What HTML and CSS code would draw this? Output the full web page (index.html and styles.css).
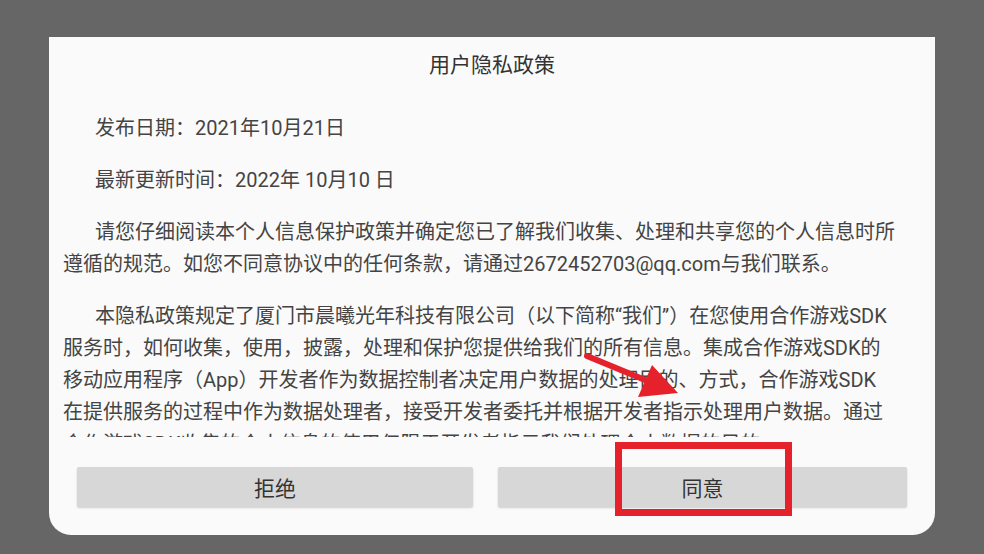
FILE: index.html
```html
<!DOCTYPE html>
<html lang="zh-CN">
<head>
<meta charset="utf-8">
<title>用户隐私政策</title>
<link rel="stylesheet" href="styles.css">
</head>
<body>
<div class="screen">
  <div class="dialog">
    <div class="title">用户隐私政策</div>
    <div class="scroll">
      <p class="para">发布日期：2021年10月21日</p>
      <p class="para">最新更新时间：2022年 10月10 日</p>
      <p class="para">请您仔细阅读本个人信息保护政策并确定您已了解我们收集、处理和共享您的个人信息时所<br><span class="cont">遵循的规范。如您不同意协议中的任何条款，请通过2672452703@qq.com与我们联系。</span></p>
      <p class="para">本隐私政策规定了厦门市晨曦光年科技有限公司（以下简称“我们”）在您使用合作游戏SDK<br><span class="cont">服务时，如何收集，使用，披露，处理和保护您提供给我们的所有信息。集成合作游戏SDK的</span><br><span class="cont">移动应用程序（App）开发者作为数据控制者决定用户数据的处理目的、方式，合作游戏SDK</span><br><span class="cont">在提供服务的过程中作为数据处理者，接受开发者委托并根据开发者指示处理用户数据。通过</span><br><span class="cont">合作游戏SDK收集的个人信息的使用仅限于开发者指示我们处理个人数据的目的。</span></p>
    </div>
    <div class="actions">
      <button class="btn">拒绝</button>
      <button class="btn">同意</button>
    </div>
  </div>
  <div class="highlight"></div>
  <svg class="arrow" width="984" height="554" viewBox="0 0 984 554">
    <line x1="587" y1="356" x2="650" y2="382" stroke="#e5222b" stroke-width="6" stroke-linecap="round"/>
    <polygon points="678,393 638,397 652,365" fill="#e5222b"/>
  </svg>
</div>
</body>
</html>
```
FILE: styles.css
```css
html, body {
  margin: 0;
  padding: 0;
}
body {
  background: #666666;
  width: 984px;
  height: 554px;
  overflow: hidden;
  font-family: Roboto, "Noto Sans CJK SC", sans-serif;
}
.screen {
  position: relative;
  width: 984px;
  height: 554px;
  padding-top: 37px;
  box-sizing: border-box;
}
.dialog {
  margin-left: 49px;
  width: 886px;
  height: 498px;
  background: #fafafa;
  border-radius: 0 0 22px 22px;
  display: flex;
  flex-direction: column;
}
.title {
  margin-top: 12px;
  height: 32px;
  line-height: 32px;
  text-align: center;
  font-size: 21px;
  color: #333;
}
.scroll {
  margin-top: 31px;
  height: 325px;
  overflow: hidden;
  padding-left: 30px;
  padding-right: 20px;
}
.para {
  margin: 0 0 20px 0;
  font-size: 20px;
  line-height: 32px;
  color: #444;
  white-space: nowrap;
  text-indent: 16px;
}
.cont {
  margin-left: -16px;
}
.actions {
  margin-top: 30px;
  margin-left: 28px;
  display: grid;
  grid-template-columns: 396px 409px;
  column-gap: 25px;
}
.btn {
  height: 40px;
  border: none;
  border-radius: 2px;
  background: #d7d7d7;
  box-shadow: 0 1px 2px rgba(0, 0, 0, 0.18);
  font-family: Roboto, "Noto Sans CJK SC", sans-serif;
  font-size: 21px;
  color: #333;
  padding: 0;
}
.highlight {
  position: absolute;
  left: 615px;
  top: 442px;
  width: 177px;
  height: 74px;
  box-sizing: border-box;
  border: 7px solid #e5222b;
}
.arrow {
  position: absolute;
  left: 0;
  top: 0;
}
```
